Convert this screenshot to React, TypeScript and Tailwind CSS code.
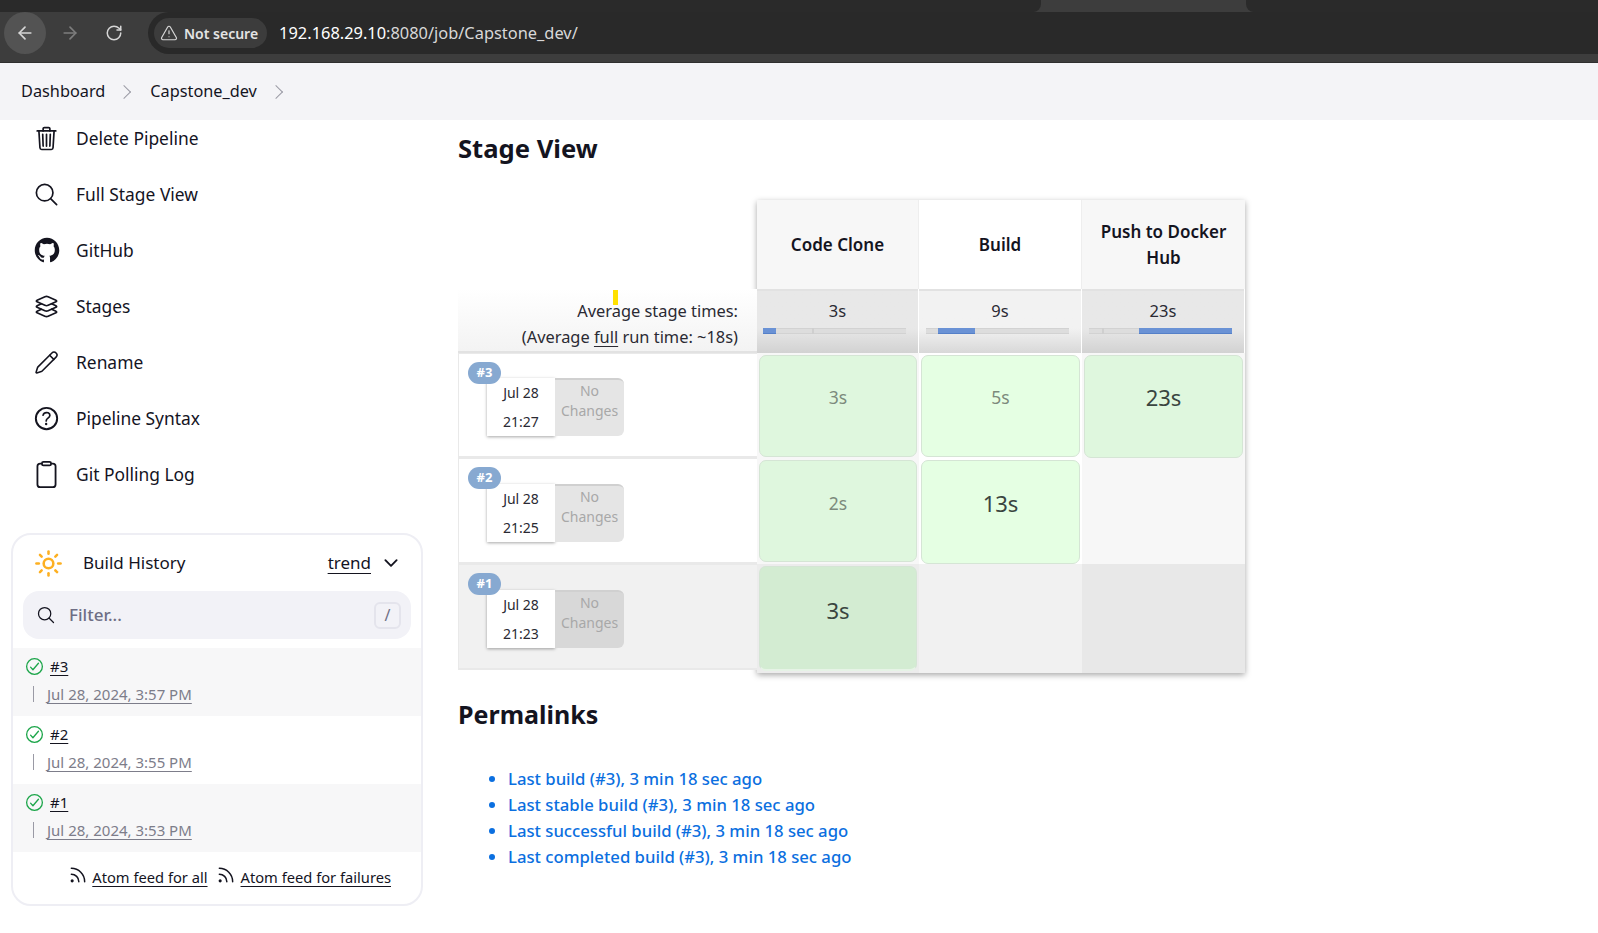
import { ArrowLeft, ArrowRight, Pencil, RotateCw, Rss, Sun, TriangleAlert } from 'lucide-react';
import {
  IoCheckmarkCircleOutline,
  IoChevronDown,
  IoClipboardOutline,
  IoHelpCircleOutline,
  IoLayersOutline,
  IoLogoGithub,
  IoSearchOutline,
  IoTrashOutline,
} from 'react-icons/io5';

const PencilIcon = ({ size }: { size: number }) => <Pencil size={size - 2} strokeWidth={1.5} />;

const sideItems = [
  { label: 'Delete Pipeline', Icon: IoTrashOutline, size: 27 },
  { label: 'Full Stage View', Icon: IoSearchOutline, size: 27 },
  { label: 'GitHub', Icon: IoLogoGithub, size: 28 },
  { label: 'Stages', Icon: IoLayersOutline, size: 27 },
  { label: 'Rename', Icon: PencilIcon, size: 27 },
  { label: 'Pipeline Syntax', Icon: IoHelpCircleOutline, size: 31 },
  { label: 'Git Polling Log', Icon: IoClipboardOutline, size: 29 },
];

const builds = [
  { id: '#3', date: 'Jul 28, 2024, 3:57 PM', bg: 'bg-[#f7f7f8]' },
  { id: '#2', date: 'Jul 28, 2024, 3:55 PM', bg: 'bg-white' },
  { id: '#1', date: 'Jul 28, 2024, 3:53 PM', bg: 'bg-[#f7f7f8]' },
];

const permalinks = [
  'Last build (#3), 3 min 18 sec ago',
  'Last stable build (#3), 3 min 18 sec ago',
  'Last successful build (#3), 3 min 18 sec ago',
  'Last completed build (#3), 3 min 18 sec ago',
];

const TopBar = () => (
  <div className="h-[63px] bg-[#3d3d3d] border-b border-[#2f2f2f]">
    <div className="h-[12px] flex">
      <div className="w-[1041px] bg-[#2a2a2a] rounded-br-[8px]" />
      <div className="ml-[205px] flex-1 bg-[#2a2a2a] rounded-bl-[8px]" />
    </div>
    <div className="h-[42px] flex items-center">
      <div className="ml-[4px] w-[42px] h-[42px] rounded-full bg-[#535353] flex items-center justify-center">
        <ArrowLeft size={20} color="#d6d6d6" />
      </div>
      <div className="ml-[2px] w-[44px] h-[42px] flex items-center justify-center">
        <ArrowRight size={20} color="#7d7d7d" />
      </div>
      <div className="w-[44px] h-[42px] flex items-center justify-center">
        <RotateCw size={18} color="#d6d6d6" />
      </div>
      <div className="ml-[12px] flex-1 h-[42px] rounded-l-full bg-[#292929] flex items-center pl-[6px]">
        <div className="h-[30px] pl-[6px] pr-[9px] rounded-full bg-[#3c3c3c] flex items-center gap-[6px] text-[14px] font-semibold text-[#e4e4e4]">
          <TriangleAlert size={18} color="#d6d6d6" strokeWidth={1.6} />
          <span>Not secure</span>
        </div>
        <span className="ml-[12px] text-[16.4px] text-white">
          192.168.29.10<span className="text-[#d8d8d8]">:8080/job/Capstone_dev/</span>
        </span>
      </div>
    </div>
  </div>
);

const Crumbs = () => (
  <div className="h-[57px] bg-[#f4f4f7] flex items-center pl-[21px] text-[16.3px] text-[#14141f]">
    <span>Dashboard</span>
    <span className="ml-[14px] mr-[21px] w-[10px] h-[10px] border-t border-r border-[#9a9aa5] rotate-45" />
    <span>Capstone_dev</span>
    <span className="ml-[14px] w-[10px] h-[10px] border-t border-r border-[#9a9aa5] rotate-45" />
  </div>
);

const Sidebar = () => (
  <div className="w-[458px] shrink-0 pl-[11px]">
    <div className="-mt-[10px] h-[423px]">
      {sideItems.map(({ label, Icon, size }) => (
        <div key={label} className="h-[56px] flex items-center text-[17.4px] text-[#14141f]">
          <span className="w-[65px] flex justify-center pl-[6px] shrink-0">
            <Icon size={size} />
          </span>
          <span>{label}</span>
        </div>
      ))}
    </div>
    <div className="w-[412px] h-[373px] border-2 border-[#eeeef4] rounded-[20px] bg-white overflow-hidden">
      <div className="h-[56px] flex items-center pl-[21px] pr-[20px]">
        <Sun size={29} color="#fdb022" strokeWidth={2.1} />
        <span className="ml-[20px] text-[17px] text-[#14141f]">Build History</span>
        <span className="ml-auto text-[17px] text-[#14141f] underline underline-offset-[4px]">trend</span>
        <IoChevronDown size={20} className="ml-[10px] text-[#14141f]" />
      </div>
      <div className="mx-[10px] h-[48px] rounded-[16px] bg-[#f2f2f7] flex items-center pl-[13px] pr-[10px]">
        <IoSearchOutline size={20} color="#14141f" />
        <span className="ml-[13px] text-[17px] font-medium text-[#6e6e85]">Filter...</span>
        <span className="ml-auto w-[27px] h-[27px] rounded-[6px] border-2 border-[#e4e4ec] flex items-center justify-center text-[16px] text-[#6e6e85]">/</span>
      </div>
      <div className="mt-[9px]">
        {builds.map((b) => (
          <div key={b.id} className={`h-[68px] ${b.bg} pl-[11px] pt-[6px]`}>
            <div className="flex items-center h-[24px]">
              <IoCheckmarkCircleOutline size={21} color="#1ea64b" />
              <span className="ml-[5px] text-[15px] text-[#14141f] underline underline-offset-[3px]">{b.id}</span>
            </div>
            <div className="flex items-center mt-[4px] h-[24px]">
              <span className="ml-[9px] w-px h-[16px] bg-[#9a9aa5]" />
              <span className="ml-[13px] text-[15px] text-[#7d7d8a] underline underline-offset-[3px]">{b.date}</span>
            </div>
          </div>
        ))}
      </div>
      <div className="h-[50px] flex items-center justify-end pr-[30px] text-[14.7px] text-[#14141f]">
        <Rss size={20} strokeWidth={1.8} className="-mt-[4px]" />
        <span className="ml-[4px] underline underline-offset-[3px]">Atom feed for all</span>
        <Rss size={20} strokeWidth={1.8} className="ml-[8px] -mt-[4px]" />
        <span className="ml-[5px] underline underline-offset-[3px]">Atom feed for failures</span>
      </div>
    </div>
  </div>
);

const AvgCell = ({ time, bg, barFill, barTick }: { time: string; bg: string; barFill: string; barTick: string }) => (
  <div className={`h-[64px] ${bg} border-t-2 border-[#e2e2e2] flex flex-col items-center pt-[7px] mr-[1px]`}>
    <span className="text-[16.5px] leading-[26px] text-[#2a2a33]">{time}</span>
    <div className="relative -left-[3px] mt-[4px] w-[143px] h-[6px] bg-[#dddddd] border-y border-[#d2d2d2]">
      <div className={`absolute -top-px h-[6px] w-[2px] bg-[#cfcfcf] ${barTick}`} />
      <div className={`absolute -top-px h-[6px] bg-[#6a92d5] border-b border-[#5580c8] ${barFill}`} />
    </div>
  </div>
);

const RunCell = ({ id, day, time, bg, grey, top }: { id: string; day: string; time: string; bg: string; grey: string; top: string }) => (
  <div className={`relative ${bg} border border-[#e9e9e9] border-r-0 border-b-2`}>
    <span className="absolute left-[9px] top-[8px] z-10 w-[33px] h-[22px] rounded-full bg-[#87a9d1] text-white text-[13px] font-bold flex items-center justify-center">{id}</span>
    <div className={`ml-[28px] ${top} w-[137px] h-[58px] flex`}>
      <div className="w-[68px] bg-white shadow-[0_1px_3px_rgba(0,0,0,0.35)] flex flex-col items-center justify-center gap-[10px] text-[14px] leading-[19px] text-[#2a2a33]">
        <span>{day}</span>
        <span>{time}</span>
      </div>
      <div className={`w-[69px] ${grey} rounded-r-[6px] border-t-2 border-[#d0d0d0] text-center text-[14px] leading-[20px] text-[#a8a8a8] pt-[1px]`}>No Changes</div>
    </div>
  </div>
);

const StageCell = ({ time, bg, big, h, pad }: { time: string; bg: string; big?: boolean; h: string; pad: string }) => (
  <div className={`${h} m-[2px] mb-0 ${bg} border border-[#d5e5d5] rounded-[7px] flex items-start justify-center ${pad}`}>
    <span className={big ? 'text-[22px] leading-[36px] text-[#3a4540]' : 'text-[17.5px] leading-[36px] text-[#7c8a7c]'}>{time}</span>
  </div>
);

const headCls = 'flex items-center justify-center text-center text-[17px] leading-[26px] font-semibold text-[#14141f]';

const StageView = () => (
  <div className="mt-[33px] relative w-[790px]">
    <div className="absolute left-[155px] top-[90px] w-[5px] h-[15px] bg-[#ffe100] z-10" />
    <div className="absolute left-[299px] top-0 bottom-0 w-[488px] shadow-[0_2px_6px_rgba(0,0,0,0.35)]" />
    <div className="relative grid grid-cols-[299px_162px_163px_163px] grid-rows-[89px_64px_105px_106px_109px]">
      <div />
      <div className={`bg-[#f7f7f7] border-r border-[#eeeeee] ${headCls}`}>Code Clone</div>
      <div className={`bg-white border-r border-[#eeeeee] ${headCls}`}>Build</div>
      <div className={`bg-[#f7f7f7] px-[10px] ${headCls}`}>Push to Docker Hub</div>

      <div className="bg-gradient-to-b from-white to-[#f3f3f3] border-b-2 border-[#e2e2e2] text-right pr-[19px] pt-[9px] text-[16.4px] leading-[26px] text-[#2a2a33]">
        Average stage times:
        <br />
        (Average <span className="underline underline-offset-[3px]">full</span> run time: ~18s)
      </div>
      <AvgCell time="3s" bg="bg-gradient-to-b from-[#e8e8e8] from-60% to-[#d2d2d2]" barFill="left-0 w-[13px]" barTick="left-[49px]" />
      <AvgCell time="9s" bg="bg-gradient-to-b from-[#f2f2f2] from-60% to-[#d8d8d8]" barFill="left-[12px] w-[37px]" barTick="left-[12px]" />
      <AvgCell time="23s" bg="bg-gradient-to-b from-[#e8e8e8] from-60% to-[#d2d2d2]" barFill="left-[50px] w-[93px]" barTick="left-[13px]" />

      <RunCell id="#3" day="Jul 28" time="21:27" bg="bg-white" grey="bg-[#e5e5e5]" top="mt-[24px]" />
      <div className="bg-[#f7f7f7]"><StageCell time="3s" bg="bg-[#dff7de]" h="h-[102px]" pad="pt-[23px]" /></div>
      <div className="bg-white"><StageCell time="5s" bg="bg-[#e5ffe3]" h="h-[102px]" pad="pt-[23px]" /></div>
      <div className="bg-[#f7f7f7]"><StageCell time="23s" bg="bg-[#dff7de]" big h="h-[103px]" pad="pt-[23px]" /></div>

      <RunCell id="#2" day="Jul 28" time="21:25" bg="bg-white" grey="bg-[#e5e5e5]" top="mt-[25px]" />
      <div className="bg-[#f7f7f7]"><StageCell time="2s" bg="bg-[#dff7de]" h="h-[102px]" pad="pt-[24px]" /></div>
      <div className="bg-white"><StageCell time="13s" bg="bg-[#e5ffe3]" big h="h-[104px]" pad="pt-[24px]" /></div>
      <div className="bg-[#f7f7f7]" />

      <RunCell id="#1" day="Jul 28" time="21:23" bg="bg-[#f1f1f1] mb-[3px]" grey="bg-[#d8d8d8]" top="mt-[25px]" />
      <div className="bg-[#ececec]"><StageCell time="3s" bg="bg-[#d3ecd2] border-b-2 border-b-[#e6f3e6]" big h="h-[105px]" pad="pt-[25px]" /></div>
      <div className="bg-[#f1f1f1]" />
      <div className="bg-[#e8e8e8]" />
    </div>
  </div>
);

const Permalinks = () => (
  <div>
    <h2 className="mt-[23px] text-[25px] leading-[36px] font-bold text-[#14141f]">Permalinks</h2>
    <ul className="mt-[34px] pl-[50px] list-disc text-[16.7px] leading-[26px] font-medium text-[#0b6fe0]">
      {permalinks.map((p) => (
        <li key={p}>{p}</li>
      ))}
    </ul>
  </div>
);

export default function App() {
  return (
    <div className="h-[933px] w-[1598px] overflow-hidden bg-white font-['Noto_Sans',sans-serif]">
      <TopBar />
      <Crumbs />
      <div className="flex">
        <Sidebar />
        <div className="flex-1">
          <h2 className="mt-[11px] text-[25.6px] leading-[36px] font-bold text-[#14141f]">Stage View</h2>
          <StageView />
          <Permalinks />
        </div>
      </div>
    </div>
  );
}
